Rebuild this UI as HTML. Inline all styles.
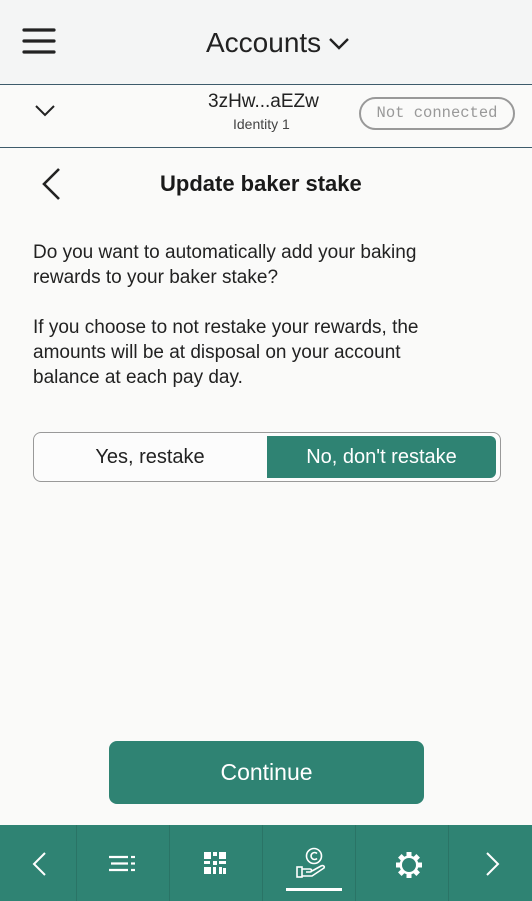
<!DOCTYPE html>
<html><head><meta charset="utf-8"><style>
*{margin:0;padding:0;box-sizing:border-box}
body{width:532px;height:901px;background:#fafaf9;font-family:"Liberation Sans",sans-serif;color:#1a1a1a;position:relative;overflow:hidden}
.hdr{position:absolute;left:0;top:0;width:532px;height:85px;background:#f4f5f5;border-bottom:1px solid #3d5b6b}
.acct{position:absolute;left:0;top:85px;width:532px;height:63px;border-bottom:1px solid #3d5b6b;background:#fafaf9}
.t{position:absolute;white-space:nowrap}
.nav{position:absolute;left:0;top:825px;width:532px;height:76px;background:#2f8373}
.nav .d{position:absolute;top:0;width:1px;height:76px;background:#2a7466}
p{font-size:19px;line-height:25px;color:#222}
</style></head><body>
<div class="hdr">
 <svg class="t" style="left:22px;top:28px" width="34" height="26"><g stroke="#222" stroke-width="3.2" stroke-linecap="round"><line x1="2" y1="2" x2="32" y2="2"/><line x1="2" y1="13" x2="32" y2="13"/><line x1="2" y1="24" x2="32" y2="24"/></g></svg>
 <div class="t" style="left:206px;top:27px;font-size:28px;color:#222">Accounts</div>
 <svg class="t" style="left:328px;top:37px" width="22" height="14"><polyline points="2,2 11,11 20,2" fill="none" stroke="#222" stroke-width="2.4"/></svg>
</div>
<div class="acct">
 <svg class="t" style="left:34px;top:19px" width="22" height="14"><polyline points="2,2 11,11 20,2" fill="none" stroke="#222" stroke-width="2"/></svg>
 <div class="t" style="left:208px;top:6px;font-size:19px;color:#222">3zHw...aEZw</div>
 <div class="t" style="left:233px;top:31px;font-size:14px;color:#444">Identity 1</div>
 <div class="t" style="left:359px;top:12px;width:156px;height:33px;border:2px solid #999;border-radius:17px;font-family:'Liberation Mono',monospace;font-size:15.5px;color:#999;text-align:center;line-height:29px">Not connected</div>
</div>
<svg class="t" style="left:40px;top:167px" width="22" height="34"><polyline points="19,2 4,17 19,32" fill="none" stroke="#222" stroke-width="2.6"/></svg>
<div class="t" style="left:160px;top:171px;font-size:22px;font-weight:bold;color:#1a1a1a">Update baker stake</div>
<p class="t" style="left:33px;top:240px">Do you want to automatically add your baking<br>rewards to your baker stake?</p>
<p class="t" style="left:33px;top:315px">If you choose to not restake your rewards, the<br>amounts will be at disposal on your account<br>balance at each pay day.</p>
<div class="t" style="left:33px;top:432px;width:468px;height:50px;border:1.5px solid #999;border-radius:8px;background:#fcfcfc"></div>
<div class="t" style="left:33px;top:432px;width:234px;height:50px;line-height:50px;text-align:center;font-size:20px;color:#222">Yes, restake</div>
<div class="t" style="left:267px;top:436px;width:229px;height:42px;background:#2f8373;border-radius:0 6px 6px 0;line-height:42px;text-align:center;font-size:20px;color:#fff">No, don't restake</div>
<div class="t" style="left:109px;top:741px;width:315px;height:63px;background:#2f8373;border-radius:8px;text-align:center;line-height:63px;font-size:23px;color:#fff">Continue</div>
<div class="nav">
 <div class="d" style="left:76px"></div><div class="d" style="left:169px"></div><div class="d" style="left:262px"></div><div class="d" style="left:355px"></div><div class="d" style="left:448px"></div>
 <svg class="t" style="left:31px;top:26px" width="16" height="26"><polyline points="14,2 3,13 14,24" fill="none" stroke="#fff" stroke-width="2"/></svg>
 <svg class="t" style="left:108px;top:30px" width="30" height="18"><g stroke="#fff" stroke-width="2.2"><line x1="1" y1="2" x2="20" y2="2"/><line x1="3" y1="8.5" x2="20" y2="8.5"/><line x1="1" y1="15" x2="20" y2="15"/><line x1="23" y1="2" x2="27" y2="2"/><line x1="23" y1="8.5" x2="27" y2="8.5"/><line x1="23" y1="15" x2="27" y2="15"/></g></svg>
 <svg class="t" style="left:204px;top:27px" width="24" height="24"><g fill="#fff"><rect x="0" y="0" width="7" height="7"/><rect x="15" y="0" width="7" height="7"/><rect x="0" y="15" width="7" height="7"/><rect x="9" y="0" width="4" height="4"/><rect x="9" y="9" width="4" height="4"/><rect x="0" y="9" width="6" height="3"/><rect x="15" y="9" width="7" height="3"/><rect x="9" y="15" width="3" height="7"/><rect x="15" y="15" width="3" height="7"/><rect x="19" y="16" width="3" height="6"/></g></svg>
 <svg class="t" style="left:294px;top:22px" width="34" height="34"><g fill="none" stroke="#fff" stroke-width="1.6"><circle cx="20" cy="9" r="7.5"/><path d="M23 6.5a3.5 3.5 0 1 0 0 5"/><rect x="3" y="20" width="5" height="10"/><path d="M8 22h8c2 0 2 3 0 3h-4M8 29h10l12-8c1-2-1-3-3-2l-9 5"/></g></svg>
 <div class="t" style="left:286px;top:63px;width:56px;height:3px;background:#fff"></div>
 <svg class="t" style="left:395px;top:26px" width="28" height="28"><g fill="#fff"><circle cx="14" cy="14" r="9.5"/><rect x="11.5" y="1" width="5" height="26"/><rect x="1" y="11.5" width="26" height="5"/><rect x="11.5" y="1" width="5" height="26" transform="rotate(45 14 14)"/><rect x="11.5" y="1" width="5" height="26" transform="rotate(-45 14 14)"/></g><circle cx="14" cy="14" r="7" fill="#2f8373"/></svg>
 <svg class="t" style="left:485px;top:26px" width="16" height="26"><polyline points="2,2 13,13 2,24" fill="none" stroke="#fff" stroke-width="2"/></svg>
</div>
</body></html>
